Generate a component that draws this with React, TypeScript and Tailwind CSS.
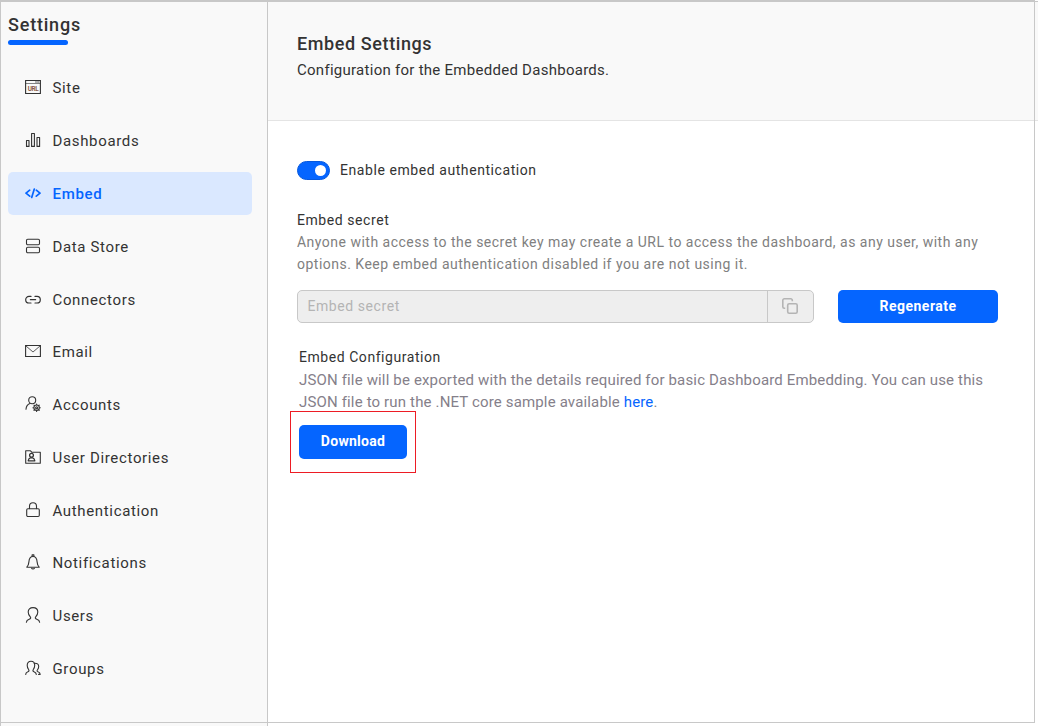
import type { ReactNode } from "react";

function Icon({ children }: { children: ReactNode }) {
  return (
    <svg
      viewBox="0 0 16 16"
      className="mb-px size-4 shrink-0"
      fill="none"
      stroke="currentColor"
      strokeWidth="1.1"
      strokeLinecap="round"
      strokeLinejoin="round"
    >
      {children}
    </svg>
  );
}

const gearTeeth = [0, 45, 90, 135, 180, 225, 270, 315];

const items: { label: string; active?: boolean; icon: ReactNode }[] = [
  {
    label: "Site",
    icon: (
      <>
        <path d="M.6 1.5h14.8v13H.6z" strokeLinejoin="miter" />
        <path d="M1 4.5h14" strokeWidth=".6" />
        <path d="M10.5 3h1M12.5 3h1.5" strokeWidth=".8" />
        <text x="8" y="11.8" textAnchor="middle" fontSize="6.4" fontWeight="700" fill="#8a5a48" stroke="none" letterSpacing="-0.4">
          URL
        </text>
      </>
    ),
  },
  {
    label: "Dashboards",
    icon: (
      <path d="M1.5 8.5h2.5v5.9H1.5zM6.6 1.5h2.8v12.9H6.6zM12 5.5h2.6v8.9H12z" />
    ),
  },
  {
    label: "Embed",
    active: true,
    icon: (
      <path d="M4.7 5.2 1 8.2l3.7 3M11.3 5.2 15 8.2l-3.700 3M9.300 4 6.700 12.400" strokeWidth="1.700" />
    ),
  },
  {
    label: "Data Store",
    icon: (
      <>
        <rect x="1.500" y="1.200" width="13" height="5.500" rx="1.200" />
        <rect x="1.500" y="9.300" width="13" height="5.500" rx="1.200" />
      </>
    ),
  },
  {
    label: "Connectors",
    icon: (
      <path d="M6 6.400H4a3.300 3.300 0 0 0 0 6.600h2M10 6.400h2a3.300 3.300 0 0 1 0 6.600h-2M5.400 9.700h5.200" strokeWidth="1.200" />
    ),
  },
  {
    label: "Email",
    icon: (
      <>
        <path d="M.6 2.500h14.800v11H.6z" strokeLinejoin="miter" />
        <path d="M1 3l7 6 7-6" strokeWidth=".8" />
      </>
    ),
  },
  {
    label: "Accounts",
    icon: (
      <>
        <circle cx="7.200" cy="4.200" r="3.500" />
        <path d="M1 13.200c.2-3 1.700-5 3.900-5.800" />
        <circle cx="11.600" cy="11.700" r="2.700" />
        <circle cx="11.600" cy="11.700" r="1" />
        {gearTeeth.map((a) => (
          <path key={a} d="M11.600 8.600v-.6" transform={`rotate(${a} 11.6 11.7)`} />
        ))}
      </>
    ),
  },
  {
    label: "User Directories",
    icon: (
      <>
        <path d="M.7 13.400V1.800h4.800l1.200 1.400h8.600v11H.7z" />
        <circle cx="6.500" cy="6.300" r="1.900" strokeWidth="1.300" />
        <path d="M3.200 11.800c.2-2 1.200-2.800 2.200-3h2.200c1 .2 2 1 2.200 3z" strokeWidth="1.300" />
      </>
    ),
  },
  {
    label: "Authentication",
    icon: (
      <>
        <rect x="1.700" y="6.800" width="12.600" height="7.700" rx="1.200" />
        <path d="M4.500 6.600V4.300a3.500 3.500 0 0 1 7 0v2.300" />
      </>
    ),
  },
  {
    label: "Notifications",
    icon: (
      <>
        <path d="M1.800 13.200h12.400c-1.600-1.400-1.900-2.800-2.100-5.300C11.900 4.800 10.500 2.500 8 2.500S4.100 4.800 3.900 7.900c-.2 2.500-.5 3.900-2.100 5.300z" />
        <path d="M7.100 2.300V.9h1.800v1.400M6.600 14.300c.5 1 2.300 1 2.800 0" />
      </>
    ),
  },
  {
    label: "Users",
    icon: (
      <path d="M1.400 15.200c.1-1.800 1-2.300 2.800-2.900 1.500-.5 1.900-1.300 1.100-2.400C3.800 8.300 3.200 6.900 3.200 5c0-2.700 1.700-4.400 4.800-4.400s4.800 1.700 4.800 4.400c0 1.900-.6 3.300-2.100 4.900-.8 1.100-.4 1.900 1.100 2.400 1.800.6 2.700 1.100 2.800 2.900" />
    ),
  },
  {
    label: "Groups",
    icon: (
      <>
        <path d="M.7 14.400c.1-1.700.8-2.200 2.200-2.700 1.200-.5 1.400-1.200.7-2.200C2.500 8.100 2.200 6.900 2.200 5.200 2.200 2.800 3.600 1.200 6 1.200s3.700 1.600 3.700 4c0 1.700-.3 2.900-1.400 4.300-.7 1-.5 1.700.7 2.200 1.400.5 2.200 1 2.300 2.700" />
        <path d="M9.200 3.200c3-.2 4.500 1 4.500 3.400 0 1.300-.4 2.300-1.300 3.400-.6.8-.4 1.400.6 1.800 1.400.5 2.100 1.100 2.200 2.600h-1.600" />
      </>
    ),
  },
];

function Sidebar() {
  return (
    <aside className="flex w-[268px] shrink-0 flex-col border-x border-[#c8c8c8] bg-[#f9f9f9] pl-[7px]">
      <h1 className="mt-[9px] text-[18px] leading-7 font-medium tracking-[0.8px]">Settings</h1>
      <div className="mt-px h-[5px] w-[60px] rounded-full bg-[#0565ff]" />
      <nav className="mt-[21.4px] flex flex-col gap-[9.77px]">
        {items.map((item) => (
          <a
            key={item.label}
            className={
              item.active
                ? "flex h-[43px] w-[244px] shrink-0 items-center gap-[11.5px] rounded-[5px] bg-[#dae8ff] pl-[17px] text-[15px] font-medium tracking-[0.7px] text-[#0565ff]"
                : "flex h-[43px] w-[244px] shrink-0 items-center gap-[11.5px] pl-[17px] text-[15px] tracking-[0.65px]"
            }
          >
            <Icon>{item.icon}</Icon>
            <span className="mt-[1.6px]">{item.label}</span>
          </a>
        ))}
      </nav>
    </aside>
  );
}

function CopyIcon() {
  return (
    <svg viewBox="0 0 16 16" className="mb-[2px] size-4" fill="none" stroke="#b4b4b4" strokeWidth="1.6">
      <rect x="5.7" y="5.7" width="9.5" height="9.5" rx="1.5" />
      <path d="M3.2 10.3H2.3A1.5 1.5 0 0 1 .8 8.8V2.3A1.5 1.5 0 0 1 2.3.8h6.500a1.500 1.500 0 0 1 1.500 1.500v1" />
    </svg>
  );
}

export default function App() {
  return (
    <div className="relative h-[726px] w-[1038px] overflow-hidden bg-white pt-px font-[Roboto,sans-serif] text-[#333]">
      <div className="flex h-[725px] border-t border-[#c8c8c8]">
        <Sidebar />
        <main className="flex flex-1 flex-col">
          <header className="h-[119px] border-b border-[#e4e4e4] bg-[#f9f9f9] pt-[30px] pl-[29px]">
            <h2 className="text-[18px] leading-6 font-medium tracking-[0.6px]">Embed Settings</h2>
            <p className="mt-[2px] text-[15px] leading-6 tracking-[0.27px]">Configuration for the Embedded Dashboards.</p>
          </header>

          <section className="flex flex-col pt-[39px] pl-[29px]">
            <label className="flex h-5 items-center gap-[10px]">
              <span className="flex h-[19px] w-[33px] items-center justify-end rounded-full border border-[#0558de] bg-[#0565ff] pr-[3px]">
                <span className="size-[11px] rounded-full bg-white" />
              </span>
              <span className="text-[14px] tracking-[0.57px]">Enable embed authentication</span>
            </label>

            <h3 className="mt-[29px] text-[14px] leading-[22px] tracking-[0.57px]">Embed secret</h3>
            <p className="text-[14px] leading-[22px] tracking-[0.49px] whitespace-nowrap text-[#808080]">
              Anyone with access to the secret key may create a URL to access the dashboard, as any user, with any
              <br />
              options. Keep embed authentication disabled if you are not using it.
            </p>

            <div className="mt-[15px] flex gap-6">
              <div className="flex h-[33px] w-[517px] rounded-[5px] border border-[#c8c8c8] bg-[#eee]">
                <span className="flex flex-1 items-center pl-[9.5px] text-[14px] tracking-[0.57px] text-[#b4b4b4]">
                  Embed secret
                </span>
                <span className="flex w-[46px] items-center justify-center border-l border-[#c8c8c8] pr-px">
                  <CopyIcon />
                </span>
              </div>
              <button className="h-[33px] w-[160px] rounded-[5px] bg-[#0565ff] text-[14px] font-bold tracking-[0.5px] text-white">
                Regenerate
              </button>
            </div>

            <div className="flex flex-col items-start pt-[23px] pl-[2px]">
              <h3 className="text-[14px] leading-[22px] tracking-[0.55px]">Embed Configuration</h3>
              <p className="mt-px text-[15px] leading-[22px] tracking-[0.152px] whitespace-nowrap text-[#85808a]">
                JSON file will be exported with the details required for basic Dashboard Embedding. You can use this
                <br />
                JSON file to run the .NET core sample available <a className="text-[#0565ff]">here</a>.
              </p>
              <div className="-mt-[2px] -ml-[9px] flex h-[62px] w-[126px] items-center justify-center border border-[#ed1c24]">
                <button className="h-[34px] w-[108px] rounded-[5px] bg-[#0565ff] pb-[2px] text-[14px] font-bold tracking-[0.27px] text-white">
                  Download
                </button>
              </div>
            </div>
          </section>
        </main>
      </div>
      <div className="pointer-events-none absolute top-0 left-0 h-[723px] w-[1035px] border border-t-2 border-[#c8c8c8]" />
    </div>
  );
}
